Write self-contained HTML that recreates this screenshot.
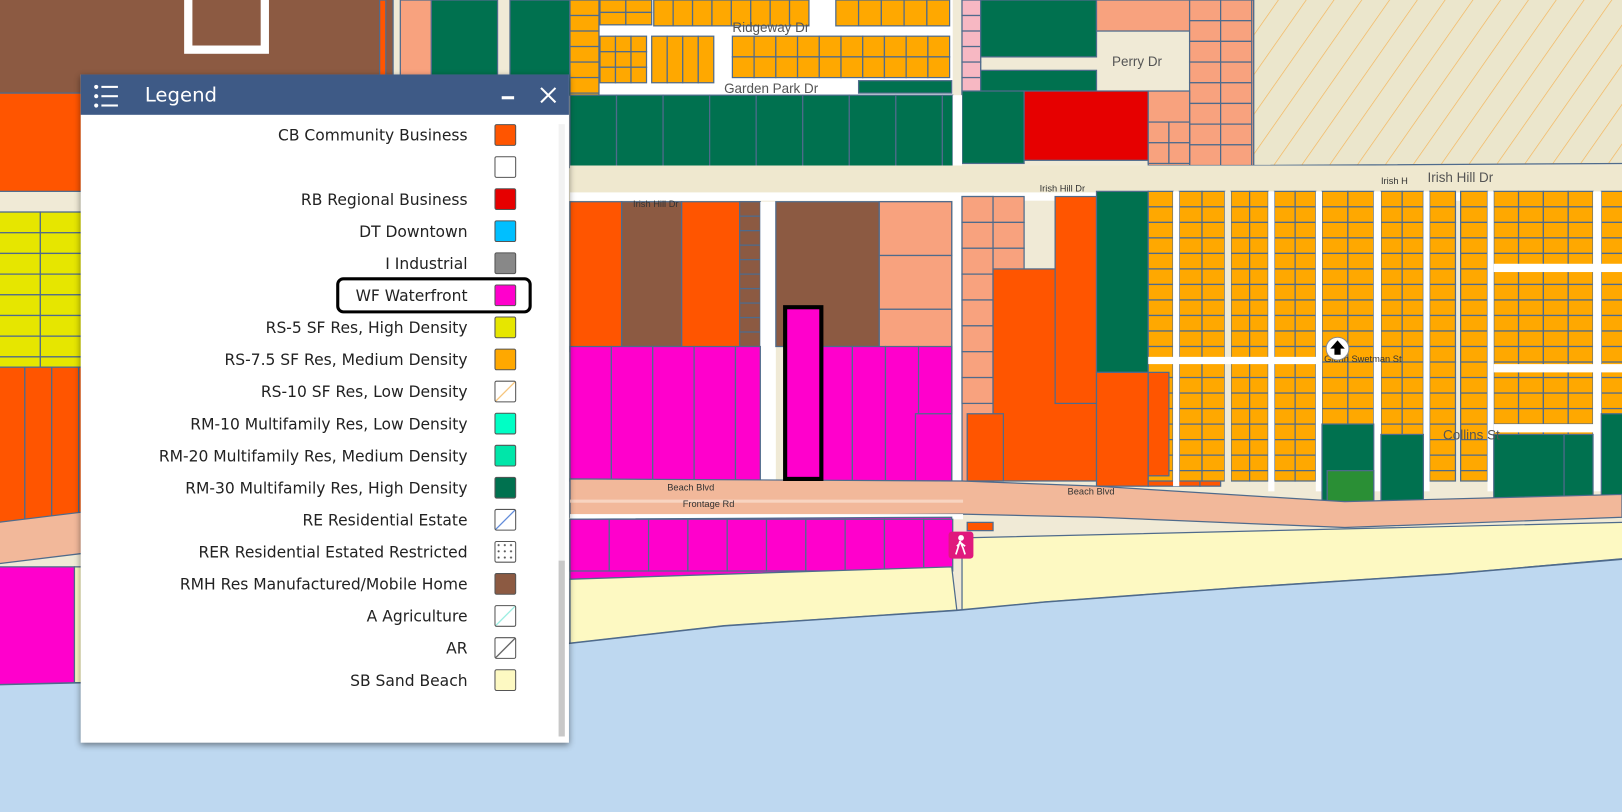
<!DOCTYPE html>
<html><head><meta charset="utf-8">
<style>
html,body{margin:0;padding:0;overflow:hidden;background:#bed8f0}
#wrap{position:absolute;left:0;top:0;width:1568px;height:785px;transform:scale(1.03444,1.03439);transform-origin:0 0;overflow:hidden}
svg{position:absolute;left:0;top:0}
#legend{position:absolute;left:78px;top:72px;width:472px;height:646px;background:#fff;box-shadow:0 2px 6px rgba(0,0,0,.45);font-family:"DejaVu Sans","Liberation Sans",sans-serif}
#hdr{height:39px;background:#3e5a86;color:#fff;position:relative}
#hdr .t{position:absolute;left:62px;top:9px;font-size:19px}
#hdr .min{position:absolute;left:407px;top:21px;width:12px;height:3px;background:#fff}
.row{position:absolute;left:0;width:374px;text-align:right;font-size:15px;color:#222;line-height:20px}
.sw{position:absolute;left:400px;width:19px;height:19px;border:1.5px solid #555;border-radius:2px}
#scroll{position:absolute;left:462px;top:48px;width:6px;height:590px;background:#f2f2f2}
#thumb{position:absolute;left:462px;top:470px;width:6px;height:170px;background:#c8c8c8}
</style></head><body>
<div id="wrap">
<svg id="map" width="1568" height="785" viewBox="0 0 1568 785" xmlns="http://www.w3.org/2000/svg">
<defs>
<pattern id="hatch" width="22" height="22" patternUnits="userSpaceOnUse" patternTransform="rotate(35)">
<rect width="22" height="22" fill="#ebe6cc"/><line x1="0" y1="0" x2="0" y2="22" stroke="#f4b55a" stroke-width="1.3"/></pattern>
</defs>
<rect width="1568" height="785" fill="#f0ead6"/>
<g id="g" stroke="#4f6b8c" stroke-width="1.2"></g>
<path d="M-5,662 L78,660 L550,622 L700,605 L925,590 L1010,582 L1200,568 L1400,555 L1575,540 L1575,800 L-5,800Z" fill="#bed8f0" stroke="#4f6b8c" stroke-width="1.5"/>
<rect x="759" y="297" width="35" height="166" fill="#ff00cc" stroke="#000" stroke-width="4"/>
<g font-family="Liberation Sans,sans-serif" font-size="9" fill="#333">
<text x="708" y="31" font-size="13" fill="#555">Ridgeway Dr</text>
<text x="700" y="90" font-size="13" fill="#555">Garden Park Dr</text>
<text x="1075" y="64" font-size="13" fill="#555">Perry Dr</text>
<text x="1005" y="185">Irish Hill Dr</text>
<text x="612" y="200">Irish Hill Dr</text>
<text x="1335" y="178">Irish H</text>
<text x="1380" y="176" font-size="13" fill="#555">Irish Hill Dr</text>
<text x="645" y="474">Beach Blvd</text>
<text x="660" y="490">Frontage Rd</text>
<text x="1032" y="478">Beach Blvd</text>
<text x="1280" y="350">Glenn Swetman St</text>
<text x="1395" y="425" font-size="13" fill="#555">Collins St</text>
</g>
<circle cx="1293" cy="337" r="11" fill="#fff" stroke="#888"/>
<path d="M1293,329 L1300,337 L1296,337 L1296,343 L1290,343 L1290,337 L1286,337Z" fill="#000"/>
<rect x="917" y="514" width="24" height="26" rx="3" fill="#e0197d"/>
<path d="M929,518 a2,2 0 1,0 0.1,0 M928,523 L926,530 L924,536 M928,523 L931,530 L933,536 M928,525 L925,528 M929,525 L933,528" stroke="#fff" stroke-width="1.6" fill="#fff"/>
</svg>
<div id="legend">
<div id="hdr">
<svg width="30" height="26" style="position:absolute;left:12px;top:8px" viewBox="0 0 30 26"><g fill="#fff"><circle cx="3" cy="4" r="2"/><circle cx="3" cy="13" r="2"/><circle cx="3" cy="22" r="2"/><rect x="8" y="3" width="16" height="2"/><rect x="8" y="12" width="16" height="2"/><rect x="8" y="21" width="16" height="2"/></g></svg>
<span class="t">Legend</span><span class="min"></span>
<svg width="18" height="18" style="position:absolute;left:443px;top:11px" viewBox="0 0 18 18"><path d="M2,2 L16,16 M16,2 L2,16" stroke="#fff" stroke-width="2"/></svg>
</div>
<div id="scroll"></div><div id="thumb"></div>
<div id="rows"></div>
<div style="position:absolute;left:247px;top:196px;width:183px;height:29px;border:3px solid #000;border-radius:7px"></div>
</div>
</div>
<script>
var g=document.getElementById('g');
function R(x,y,w,h,f,ns){var r=document.createElementNS('http://www.w3.org/2000/svg','rect');r.setAttribute('x',x);r.setAttribute('y',y);r.setAttribute('width',w);r.setAttribute('height',h);r.setAttribute('fill',f);if(ns)r.setAttribute('stroke','none');g.appendChild(r);}
function P(d,f){var p=document.createElementNS('http://www.w3.org/2000/svg','path');p.setAttribute('d',d);p.setAttribute('fill',f);g.appendChild(p);}
function lots(x,y,w,h,f,rh,cols){cols=cols||2;var cw=w/cols;for(var c=0;c<cols;c++)for(var yy=y;yy<y+h-1;yy+=rh){R(x+c*cw,yy,cw,Math.min(rh,y+h-yy),f);}}
function strips(x,y,w,h,f,cw){for(var xx=x;xx<x+w-1;xx+=cw)R(xx,y,Math.min(cw,x+w-xx),h,f);}
var O='#ff5500',Y='#ffa800',G='#00714f',M='#ff00cc',B='#8c5a42',S='#f8a27e',SA='#fdf9c2',YE='#e6e600',RD='#e60000',LG='#2a8f35';
R(-2,-2,382,92,B);R(-2,90,82,95,O);R(-2,205,82,150,YE);lots(-2,205,82,150,YE,20,2);
R(178,0,82,52,'#fff',1);R(186,0,66,44,B,1);
R(-2,355,82,150,O);strips(-2,355,82,150,O,26);
P('M-2,505 L80,495 L80,535 L-2,545Z','#f2b89a');
R(-2,548,74,115,M);R(72,548,8,112,SA);
R(367,0,6,92,O);R(387,0,30,92,S);R(417,0,64,92,G);R(493,0,58,92,G);
R(551,0,370,92,'#fff',1);
lots(580,0,50,25,Y,12,2);lots(632,0,150,25,Y,25,8);lots(808,0,110,25,Y,25,5);
lots(580,35,45,45,Y,15,3);lots(630,35,60,45,Y,45,4);lots(708,35,210,40,Y,20,10);
R(830,78,90,12,G);R(551,0,28,92,Y);lots(551,0,28,90,Y,15,1);
R(930,0,18,92,'#f7b8c3');lots(930,0,18,90,'#f7b8c3',15,1);
R(948,0,112,55,G);R(948,68,112,22,G);R(1060,0,90,30,S);R(1150,0,62,160,S);lots(1150,0,60,160,S,20,2);
P('M1212,-2 L1570,-2 L1570,158 L1212,160Z','url(#hatch)');
strips(551,92,370,70,G,45);R(930,88,60,70,G);R(990,88,120,67,RD);R(1110,88,40,72,S);lots(1110,118,40,40,S,20,2);
R(921,92,9,100,'#fff',1);
R(551,160,1017,28,'#efe8cf',1);R(551,186,1017,8,'#fff',1);
R(551,195,50,145,O);R(601,195,58,140,B);R(659,195,56,145,O);R(715,195,20,145,B);lots(715,195,20,140,B,14,1);
R(735,195,15,270,'#fff',1);R(750,195,100,140,B);R(850,195,70,205,S);lots(850,195,70,205,S,52,1);
strips(551,335,184,130,M,40);strips(760,335,160,130,M,32);R(885,400,35,65,M);
R(921,192,9,285,'#fff',1);
R(930,190,30,280,S);lots(930,190,60,200,S,25,2);R(960,260,100,205,O);R(1020,190,40,200,O);R(1060,185,50,175,G);
R(935,400,35,65,O);strips(1060,360,120,110,O,50);
var cols=[[1110,1134],[1140,1184],[1190,1226],[1232,1272],[1278,1328],[1335,1376],[1382,1407],[1412,1438],[1444,1540],[1548,1570]];
cols.forEach(function(c,i){var w=c[1]-c[0];var n=w>60?4:(w>30?2:1);lots(c[0],185,w,280,Y,15,n);});
R(1134,185,6,285,'#fff',1);R(1184,185,6,300,'#f0ead6',1);R(1226,185,6,290,'#fff',1);R(1272,185,6,290,'#fff',1);R(1328,185,7,290,'#fff',1);R(1376,185,6,290,'#fff',1);R(1438,185,6,290,'#fff',1);R(1540,185,8,290,'#fff',1);
R(1110,345,165,7,'#fff',1);R(1444,255,124,8,'#fff',1);R(1444,352,124,8,'#fff',1);R(1444,410,124,8,'#fff',1);
R(1278,410,50,80,G);R(1283,455,45,35,LG);R(1335,420,41,70,G);R(1444,420,68,65,G);R(1512,420,28,60,G);R(1548,400,22,80,G);
R(1110,360,20,100,O);
P('M551,463 L930,465 L1060,470 L1300,485 L1568,478 L1568,500 L1300,510 L1060,500 L930,497 L551,500Z','#f2b89a');
R(551,483,380,3,'#f8d4c0',1);
R(551,497,380,5,'#fff',1);
P('M551,502 L920,500 L920,548 L551,560Z',M);
strips(551,502,370,50,M,38);
P('M551,560 L920,548 L925,590 L700,605 L551,622Z',SA);
P('M930,520 L1570,505 L1570,540 L1400,555 L1200,568 L1010,582 L930,590Z',SA);
R(935,505,25,8,O);
var items=[['CB Community Business','#ff5500'],['','#fff'],['RB Regional Business','#e60000'],['DT Downtown','#00bfff'],['I Industrial','#888'],['WF Waterfront','#ff00cc'],['RS-5 SF Res, High Density','#e6e600'],['RS-7.5 SF Res, Medium Density','#ffa800'],['RS-10 SF Res, Low Density','hx:#f4b55a'],['RM-10 Multifamily Res, Low Density','#00ffc5'],['RM-20 Multifamily Res, Medium Density','#00e6a9'],['RM-30 Multifamily Res, High Density','#00714f'],['RE Residential Estate','hx:#3a6fd0'],['RER Residential Estated Restricted','dots'],['RMH Res Manufactured/Mobile Home','#8c5a42'],['A Agriculture','hx:#7ee8d8'],['AR','hx:#333'],['SB Sand Beach','#fdf9c2']];
var h='';items.forEach(function(it,i){var y=49+i*31;h+='<div class="row" style="top:'+(y)+'px">'+it[0]+'</div>';var s=it[1];var st='top:'+(y-1)+'px;';if(s.indexOf('hx:')==0){st+='background:linear-gradient(to bottom right,#fff calc(50% - 1px),'+s.slice(3)+' 50%,#fff calc(50% + 1px));';}else if(s=='dots'){st+='background:radial-gradient(circle,#555 0.8px,#fff 1.2px) 0 0/6px 6px;';}else st+='background:'+s+';';h+='<div class="sw" style="'+st+'"></div>';});
document.getElementById('rows').innerHTML=h;
</script>
</body></html>
